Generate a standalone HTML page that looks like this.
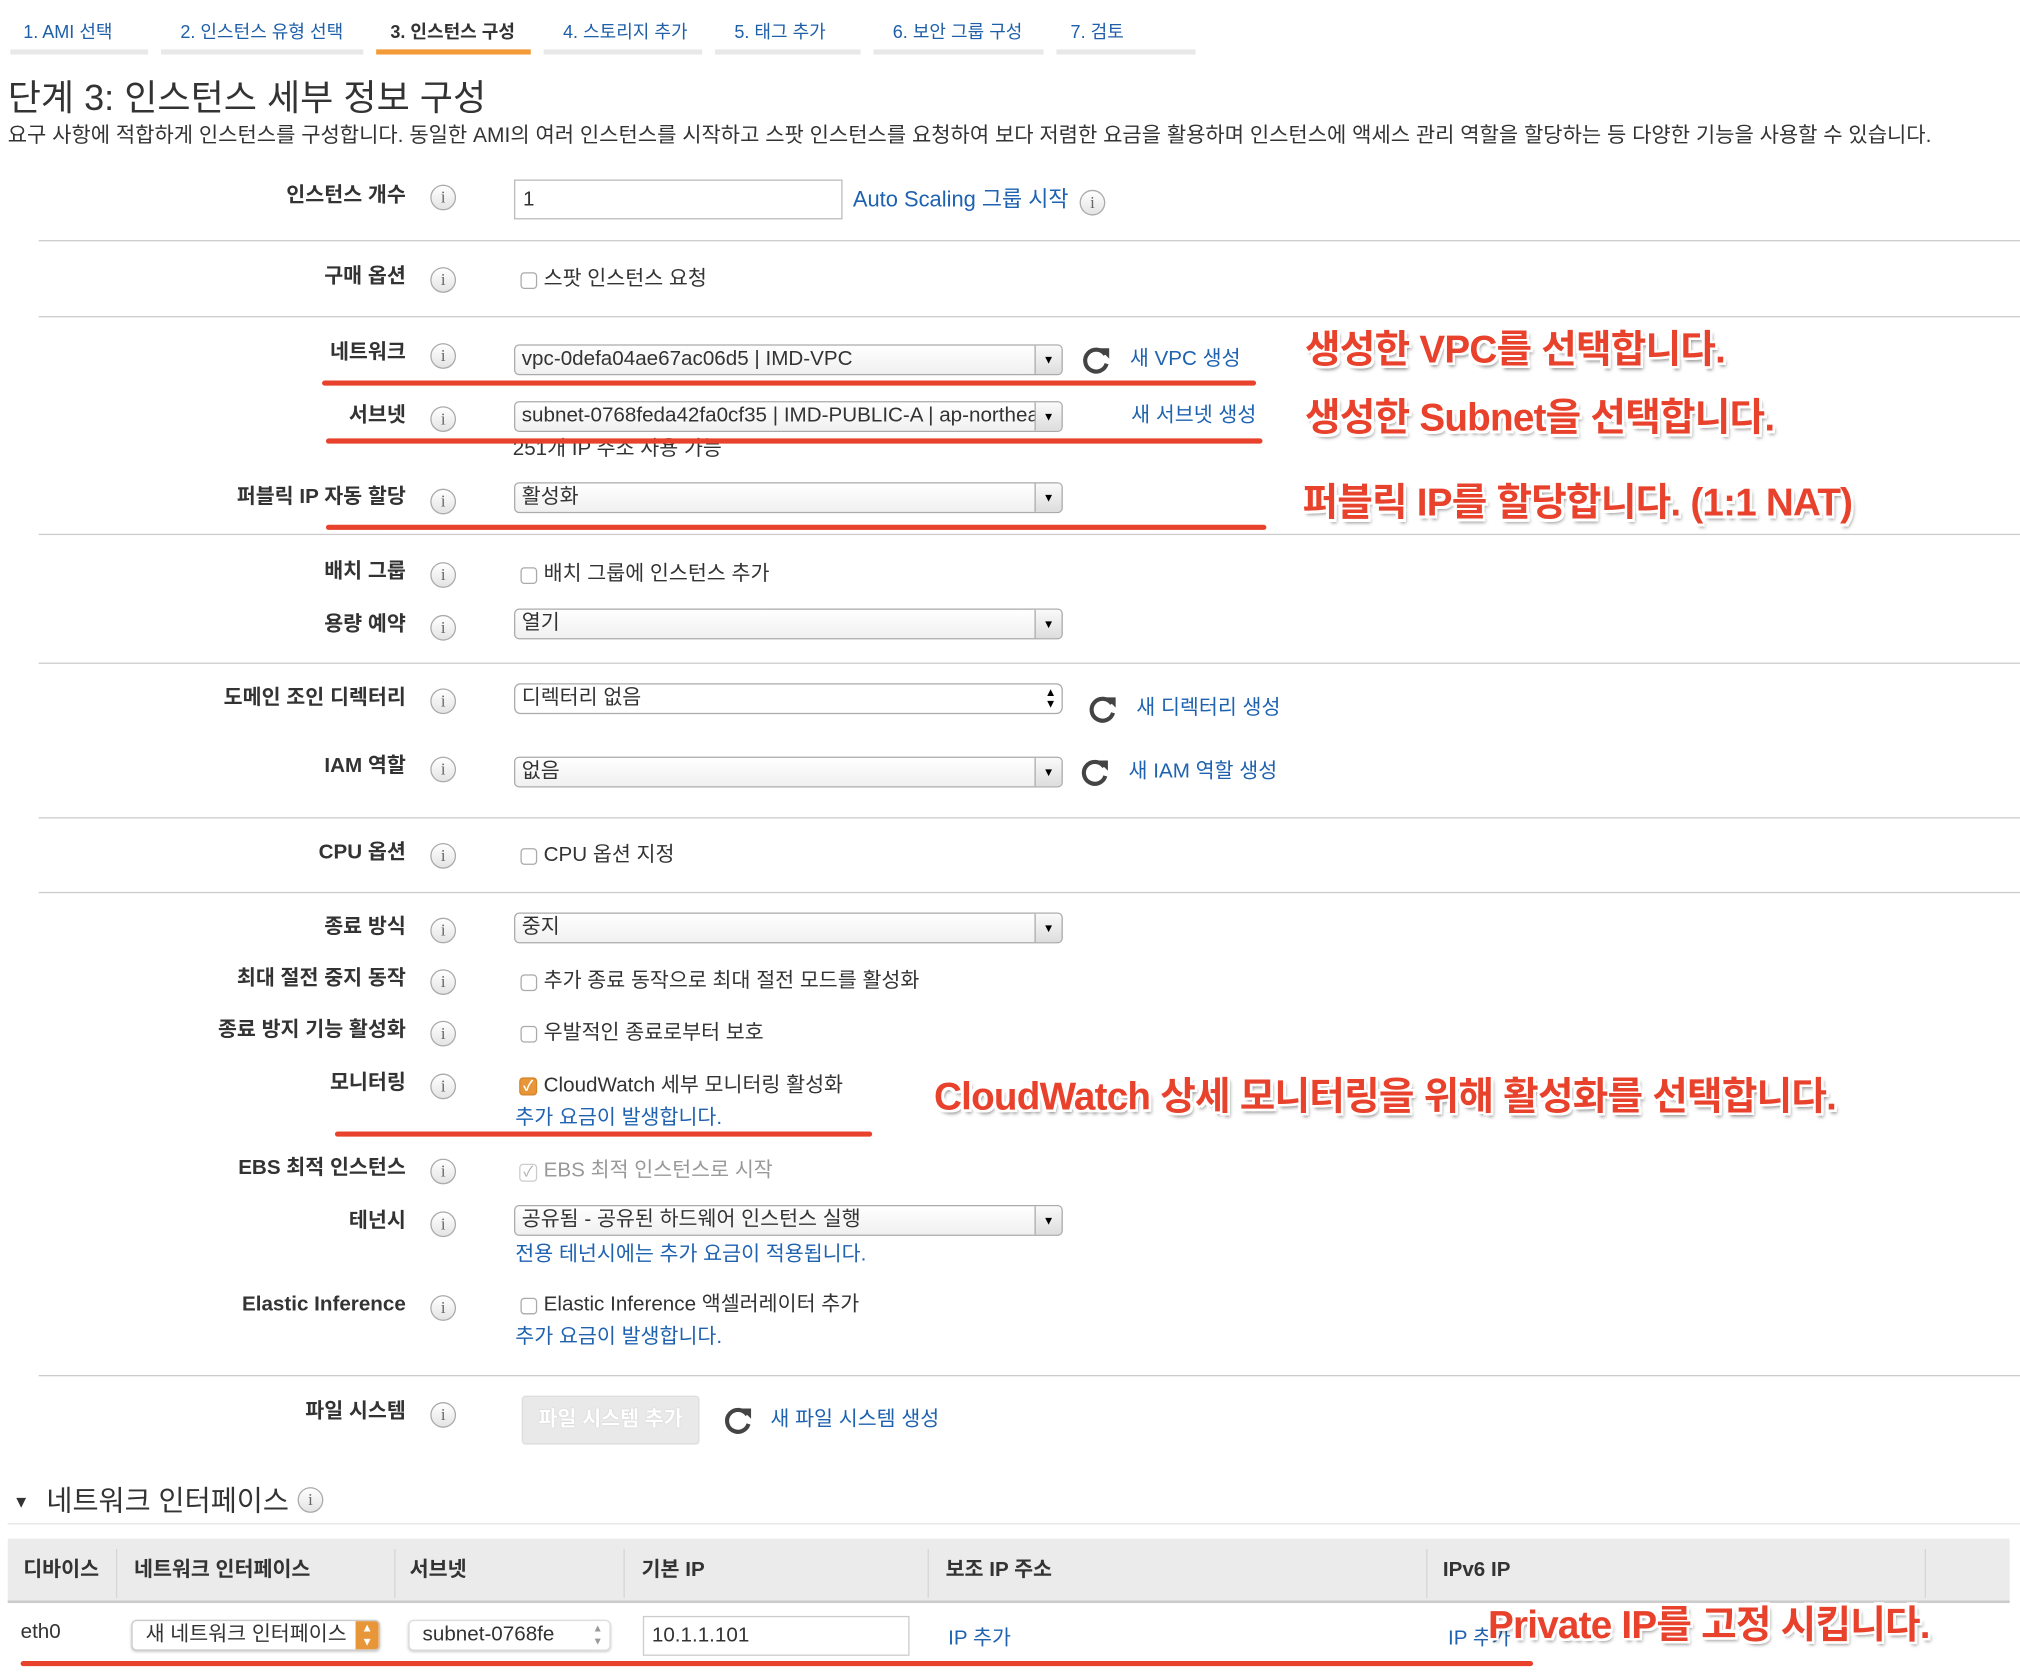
<!DOCTYPE html>
<html><head><meta charset="utf-8">
<style>
html,body{margin:0;padding:0;background:#fff;width:2020px;height:1674px;overflow:hidden}
#w{position:absolute;left:0;top:3px;width:1568px;height:1300px;transform:scale(1.28827);transform-origin:0 0;font-family:"Liberation Sans","Noto Sans CJK KR",sans-serif;color:#333;font-size:16px}
#w div,#w span{position:absolute;white-space:nowrap}
.t{line-height:20px}
.tab{font-size:14px;color:#1e5fa8;line-height:20px;top:12px}
.bar{top:36px;height:4px;background:#e8e8e8}
.lbl{right:1253px;font-weight:bold;line-height:20px}
.info{width:18px;height:18px;border:1.5px solid #aaa;border-radius:50%;background:linear-gradient(#fff,#e4e4e4);font-size:13px;line-height:18px;text-align:center;color:#666;font-family:"Liberation Serif",serif}
.hr{left:30px;right:0;height:1px;background:#ccc}
.sel{left:399px;width:426px;height:24px;border:1px solid #aaa;border-radius:4px;background:linear-gradient(#fff,#f0f0f0);box-sizing:border-box;line-height:22px;padding-left:5px;font-size:16px;overflow:hidden}
.sel .ar{right:0;top:0;width:20px;height:22px;border-left:1px solid #aaa;background:linear-gradient(#fafafa,#ddd);font-size:9px;text-align:center;line-height:22px;color:#000}
.cb{width:13px;height:13px;border:1px solid #aaa;border-radius:3px;background:#fff;box-sizing:border-box}
.lnk{color:#1e62b0;line-height:20px}
.ann{color:#e8412c;font-weight:bold;font-size:30px;letter-spacing:-0.6px;line-height:36px;text-shadow:-2px 0 #fff,2px 0 #fff,0 -2px #fff,0 2px #fff,-2px -2px #fff,2px 2px #fff,-2px 2px #fff,2px -2px #fff,2px 3px 3px rgba(0,0,0,.45)}
.red{height:4px;background:#e8412c;border-radius:2px}
.ref{width:24px;height:24px}
.th{font-weight:bold;line-height:20px;top:1207px}
.sep{top:1200px;width:1px;height:38px;background:#d5d5d5}
</style></head><body><div id="w">

<div class="tab" style="left:18px">1. AMI 선택</div>
<div class="tab" style="left:140px">2. 인스턴스 유형 선택</div>
<div class="tab" style="left:303px;color:#333;font-weight:bold">3. 인스턴스 구성</div>
<div class="tab" style="left:437px">4. 스토리지 추가</div>
<div class="tab" style="left:570px">5. 태그 추가</div>
<div class="tab" style="left:693px">6. 보안 그룹 구성</div>
<div class="tab" style="left:831px">7. 검토</div>
<div class="bar" style="left:8px;width:107px"></div>
<div class="bar" style="left:125px;width:157px"></div>
<div class="bar" style="left:292px;width:120px;background:#f29b38"></div>
<div class="bar" style="left:422px;width:123px"></div>
<div class="bar" style="left:555px;width:113px"></div>
<div class="bar" style="left:678px;width:132px"></div>
<div class="bar" style="left:820px;width:108px"></div>

<div style="left:6px;top:56px;font-size:28px;line-height:36px">단계 3: 인스턴스 세부 정보 구성</div>
<div class="t" style="left:6px;top:93px;font-size:16.3px">요구 사항에 적합하게 인스턴스를 구성합니다. 동일한 AMI의 여러 인스턴스를 시작하고 스팟 인스턴스를 요청하여 보다 저렴한 요금을 활용하며 인스턴스에 액세스 관리 역할을 할당하는 등 다양한 기능을 사용할 수 있습니다.</div>

<div class="lbl" style="top:140px">인스턴스 개수</div><div class="info" style="left:334px;top:141px">i</div>
<div style="left:399px;top:137px;width:255px;height:31px;border:1px solid #bbb;box-sizing:border-box;line-height:29px;padding-left:6px">1</div>
<div class="lnk" style="left:662px;top:143px;font-size:17px">Auto Scaling 그룹 시작</div><div class="info" style="left:838px;top:145px">i</div>
<div class="hr" style="top:184px"></div>

<div class="lbl" style="top:203px">구매 옵션</div><div class="info" style="left:334px;top:205px">i</div>
<div class="cb" style="left:404px;top:209px"></div><div class="t" style="left:422px;top:205px">스팟 인스턴스 요청</div>
<div class="hr" style="top:243px"></div>

<div class="lbl" style="top:262px">네트워크</div><div class="info" style="left:334px;top:264px">i</div>
<div class="sel" style="top:265px">vpc-0defa04ae67ac06d5 | IMD-VPC<span class="ar">▼</span></div>
<svg class="ref" style="position:absolute;left:839px;top:265px" viewBox="0 0 24 24"><path d="M19 8 A8.5 8.5 0 1 0 20 15" fill="none" stroke="#444" stroke-width="3.2"/><path d="M14 3 L22 3 L22 11 Z" fill="#444"/></svg>
<div class="lnk" style="left:877px;top:267px">새 VPC 생성</div>
<div class="red" style="left:250px;width:725px;top:293px"></div>
<div class="ann" style="left:1013px;top:252px">생성한 VPC를 선택합니다.</div>

<div class="lbl" style="top:311px">서브넷</div><div class="info" style="left:334px;top:313px">i</div>
<div class="sel" style="top:309px">subnet-0768feda42fa0cf35 | IMD-PUBLIC-A | ap-northeast-2a<span class="ar">▼</span></div>
<div class="lnk" style="left:878px;top:311px">새 서브넷 생성</div>
<div class="t" style="left:398px;top:337px">251개 IP 주소 사용 가능</div>
<div class="red" style="left:253px;width:727px;top:338px"></div>
<div class="ann" style="left:1013px;top:305px">생성한 Subnet을 선택합니다.</div>

<div class="lbl" style="top:374px">퍼블릭 IP 자동 할당</div><div class="info" style="left:334px;top:377px">i</div>
<div class="sel" style="top:372px">활성화<span class="ar">▼</span></div>
<div class="red" style="left:253px;width:730px;top:405px"></div>
<div class="hr" style="top:412px"></div>
<div class="ann" style="left:1011px;top:371px">퍼블릭 IP를 할당합니다. (1:1 NAT)</div>

<div class="lbl" style="top:432px">배치 그룹</div><div class="info" style="left:334px;top:434px">i</div>
<div class="cb" style="left:404px;top:438px"></div><div class="t" style="left:422px;top:434px">배치 그룹에 인스턴스 추가</div>
<div class="lbl" style="top:473px">용량 예약</div><div class="info" style="left:334px;top:475px">i</div>
<div class="sel" style="top:470px">열기<span class="ar">▼</span></div>
<div class="hr" style="top:512px"></div>

<div class="lbl" style="top:530px">도메인 조인 디렉터리</div><div class="info" style="left:334px;top:532px">i</div>
<div class="sel" style="top:528px;border-radius:5px;background:#fff">디렉터리 없음<span style="right:4px;top:0;font-size:9px;line-height:9px;padding-top:2px;color:#000">▲<br>▼</span></div>
<svg class="ref" style="position:absolute;left:844px;top:536px" viewBox="0 0 24 24"><path d="M19 8 A8.5 8.5 0 1 0 20 15" fill="none" stroke="#444" stroke-width="3.2"/><path d="M14 3 L22 3 L22 11 Z" fill="#444"/></svg>
<div class="lnk" style="left:882px;top:538px">새 디렉터리 생성</div>

<div class="lbl" style="top:583px">IAM 역할</div><div class="info" style="left:334px;top:585px">i</div>
<div class="sel" style="top:585px">없음<span class="ar">▼</span></div>
<svg class="ref" style="position:absolute;left:838px;top:585px" viewBox="0 0 24 24"><path d="M19 8 A8.5 8.5 0 1 0 20 15" fill="none" stroke="#444" stroke-width="3.2"/><path d="M14 3 L22 3 L22 11 Z" fill="#444"/></svg>
<div class="lnk" style="left:876px;top:587px">새 IAM 역할 생성</div>
<div class="hr" style="top:632px"></div>

<div class="lbl" style="top:650px">CPU 옵션</div><div class="info" style="left:334px;top:652px">i</div>
<div class="cb" style="left:404px;top:656px"></div><div class="t" style="left:422px;top:652px">CPU 옵션 지정</div>
<div class="hr" style="top:690px"></div>

<div class="lbl" style="top:708px">종료 방식</div><div class="info" style="left:334px;top:710px">i</div>
<div class="sel" style="top:706px">중지<span class="ar">▼</span></div>
<div class="lbl" style="top:748px">최대 절전 중지 동작</div><div class="info" style="left:334px;top:750px">i</div>
<div class="cb" style="left:404px;top:754px"></div><div class="t" style="left:422px;top:750px">추가 종료 동작으로 최대 절전 모드를 활성화</div>
<div class="lbl" style="top:788px">종료 방지 기능 활성화</div><div class="info" style="left:334px;top:790px">i</div>
<div class="cb" style="left:404px;top:794px"></div><div class="t" style="left:422px;top:790px">우발적인 종료로부터 보호</div>

<div class="lbl" style="top:829px">모니터링</div><div class="info" style="left:334px;top:831px">i</div>
<div class="cb" style="left:403px;top:834px;width:14px;height:14px;background:#e8963a;border-color:#d88428;color:#fff;font-size:11px;line-height:12px;text-align:center;font-weight:bold">✓</div>
<div class="t" style="left:422px;top:831px">CloudWatch 세부 모니터링 활성화</div>
<div class="lnk" style="left:400px;top:856px">추가 요금이 발생합니다.</div>
<div class="red" style="left:260px;width:417px;top:876px"></div>
<div class="ann" style="left:725px;top:832px">CloudWatch 상세 모니터링을 위해 활성화를 선택합니다.</div>

<div class="lbl" style="top:895px">EBS 최적 인스턴스</div><div class="info" style="left:334px;top:897px">i</div>
<div class="cb" style="left:403px;top:901px;width:14px;height:14px;border-color:#ccc;color:#aaa;font-size:11px;line-height:12px;text-align:center">✓</div>
<div class="t" style="left:422px;top:897px;color:#999">EBS 최적 인스턴스로 시작</div>

<div class="lbl" style="top:936px">테넌시</div><div class="info" style="left:334px;top:938px">i</div>
<div class="sel" style="top:933px">공유됨 - 공유된 하드웨어 인스턴스 실행<span class="ar">▼</span></div>
<div class="lnk" style="left:400px;top:962px">전용 테넌시에는 추가 요금이 적용됩니다.</div>

<div class="lbl" style="top:1001px">Elastic Inference</div><div class="info" style="left:334px;top:1003px">i</div>
<div class="cb" style="left:404px;top:1005px"></div><div class="t" style="left:422px;top:1001px">Elastic Inference 액셀러레이터 추가</div>
<div class="lnk" style="left:400px;top:1026px">추가 요금이 발생합니다.</div>
<div class="hr" style="top:1065px"></div>

<div class="lbl" style="top:1084px">파일 시스템</div><div class="info" style="left:334px;top:1086px">i</div>
<div style="left:405px;top:1081px;width:138px;height:38px;border:1px solid #ddd;border-radius:3px;background:#e9e9e9;box-sizing:border-box;color:#fff;font-weight:bold;text-align:center;line-height:36px;text-shadow:0 0 1px #bbb">파일 시스템 추가</div>
<svg class="ref" style="position:absolute;left:561px;top:1088px" viewBox="0 0 24 24"><path d="M19 8 A8.5 8.5 0 1 0 20 15" fill="none" stroke="#444" stroke-width="3.2"/><path d="M14 3 L22 3 L22 11 Z" fill="#444"/></svg>
<div class="lnk" style="left:598px;top:1090px">새 파일 시스템 생성</div>

<div style="left:10px;top:1157px;font-size:13px;line-height:14px">▼</div>
<div style="left:36px;top:1149px;font-size:22px;line-height:28px">네트워크 인터페이스</div>
<div class="info" style="left:231px;top:1152px">i</div>
<div style="left:6px;right:0;top:1180px;height:1px;background:#e5e5e5"></div>

<div style="left:6px;top:1192px;width:1554px;height:50px;background:#ebebeb;border-bottom:2px solid #ccc;box-sizing:border-box"></div>
<div class="th" style="left:18px">디바이스</div>
<div class="th" style="left:104px">네트워크 인터페이스</div>
<div class="th" style="left:318px">서브넷</div>
<div class="th" style="left:498px">기본 IP</div>
<div class="th" style="left:734px">보조 IP 주소</div>
<div class="th" style="left:1120px">IPv6 IP</div>
<div class="sep" style="left:90px"></div><div class="sep" style="left:306px"></div><div class="sep" style="left:484px"></div><div class="sep" style="left:720px"></div><div class="sep" style="left:1107px"></div><div class="sep" style="left:1494px"></div>

<div class="t" style="left:16px;top:1255px">eth0</div>
<div style="left:102px;top:1255px;width:193px;height:24px;border:1px solid #ccc;border-radius:4px;box-sizing:border-box;line-height:22px;padding-left:10px;overflow:hidden;background:#fff;box-shadow:0 1px 2px #ccc">새 네트워크 인터페이스<span style="right:0;top:0;width:18px;height:22px;background:#e8963a;color:#fff;font-size:9px;line-height:11px;text-align:center">▲<br>▼</span></div>
<div style="left:317px;top:1255px;width:157px;height:24px;border:1px solid #ddd;border-radius:4px;box-sizing:border-box;line-height:22px;padding-left:10px;overflow:hidden;background:#fff;box-shadow:0 1px 2px #ccc">subnet-0768fe<span style="right:0;top:0;width:18px;height:22px;background:#fff;color:#999;font-size:8px;line-height:10px;text-align:center;padding-top:1px">▲<br>▼</span></div>
<div style="left:499px;top:1252px;width:207px;height:31px;border:1px solid #ccc;box-sizing:border-box;line-height:29px;padding-left:6px">10.1.1.101</div>
<div class="lnk" style="left:736px;top:1260px">IP 추가</div>
<div class="lnk" style="left:1124px;top:1260px">IP 추가</div>
<div class="red" style="left:16px;width:1174px;top:1287px"></div>
<div class="ann" style="left:1155px;top:1242px">Private IP를 고정 시킵니다.</div>

</div></body></html>
